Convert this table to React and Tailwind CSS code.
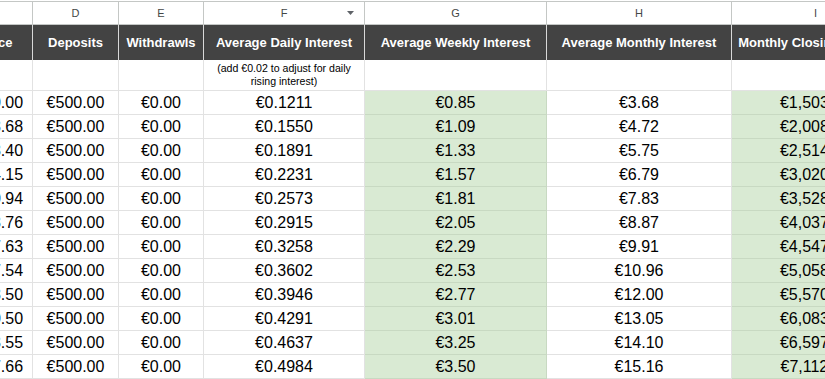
const cols = [
	{ letter: 'C', w: 'w-[90px] ml-[-57px]', head: 'Balance' },
	{ letter: 'D', w: 'w-[86px]', head: 'Deposits' },
	{ letter: 'E', w: 'w-[85px]', head: 'Withdrawls' },
	{ letter: 'F', w: 'w-[161px]', head: 'Average Daily Interest' },
	{ letter: 'G', w: 'w-[182px]', head: 'Average Weekly Interest', green: true },
	{ letter: 'H', w: 'w-[185px]', head: 'Average Monthly Interest' },
	{ letter: 'I', w: 'w-[168px]', head: 'Monthly Closing Balance', green: true },
];

const opening = ['1,000.00', '1,503.68', '2,008.40', '2,514.15', '3,020.94', '3,528.76', '4,037.63', '4,547.54', '5,058.50', '5,570.50', '6,083.55', '6,597.66'];
const daily = ['0.1211', '0.1550', '0.1891', '0.2231', '0.2573', '0.2915', '0.3258', '0.3602', '0.3946', '0.4291', '0.4637', '0.4984'];
const weekly = ['0.85', '1.09', '1.33', '1.57', '1.81', '2.05', '2.29', '2.53', '2.77', '3.01', '3.25', '3.50'];
const monthly = ['3.68', '4.72', '5.75', '6.79', '7.83', '8.87', '9.91', '10.96', '12.00', '13.05', '14.10', '15.16'];
const closing = ['1,503.68', '2,008.40', '2,514.15', '3,020.94', '3,528.76', '4,037.63', '4,547.54', '5,058.50', '5,570.50', '6,083.55', '6,597.66', '7,112.82'];

const rows = opening.map((o, i) => ['€' + o, '€500.00', '€0.00', '€' + daily[i], '€' + weekly[i], '€' + monthly[i], '€' + closing[i]]);

const App = () => {
	return (
		<div className="w-[825px] h-[379px] overflow-hidden bg-white pt-px" style={{ fontFamily: '"Liberation Sans", Arial, sans-serif' }}>
			{/* column letters */}
			<div className="flex h-[24px] border-t border-b border-[#c4c7c5]">
				{cols.map((c) => (
					<div key={c.letter} className={`${c.w} shrink-0 relative flex items-center justify-center border-r border-[#c4c7c5] text-[11px] text-[#444746]`}>
						{c.letter}
						{c.letter === 'F' && (
							<svg className="absolute right-[10px] top-[9px]" width="7" height="4" viewBox="0 0 7 4">
								<path d="M0 0h7L3.5 4z" fill="#5f6368" />
							</svg>
						)}
					</div>
				))}
			</div>

			{/* dark header */}
			<div className="flex h-[35px] bg-[#434343]">
				{cols.map((c) => (
					<div key={c.letter} className={`${c.w} shrink-0 flex items-center justify-center whitespace-nowrap border-r border-[#d9d9d9] text-[13px] font-bold text-white`}>
						{c.head}
					</div>
				))}
			</div>

			{/* note row */}
			<div className="flex h-[31px]">
				{cols.map((c) => (
					<div key={c.letter} className={`${c.w} shrink-0 flex items-center justify-center border-r border-b border-[#e2e2e2] text-center text-[10.6px] leading-[13px] text-black`}>
						{c.letter === 'F' && (
							<span>
								(add €0.02 to adjust for daily
								<br />
								rising interest)
							</span>
						)}
					</div>
				))}
			</div>

			{/* data */}
			{rows.map((r, ri) => (
				<div key={ri} className="flex h-[24px]">
					{cols.map((c, ci) => (
						<div
							key={c.letter}
							className={`${c.w} shrink-0 flex items-center justify-center whitespace-nowrap border-r border-b text-[16px] text-black ${c.green ? 'bg-[#d9ead3] border-[#c8d9c2]' : 'border-[#e2e2e2]'}`}>
							{r[ci]}
						</div>
					))}
				</div>
			))}
		</div>
	);
};

export default App;
